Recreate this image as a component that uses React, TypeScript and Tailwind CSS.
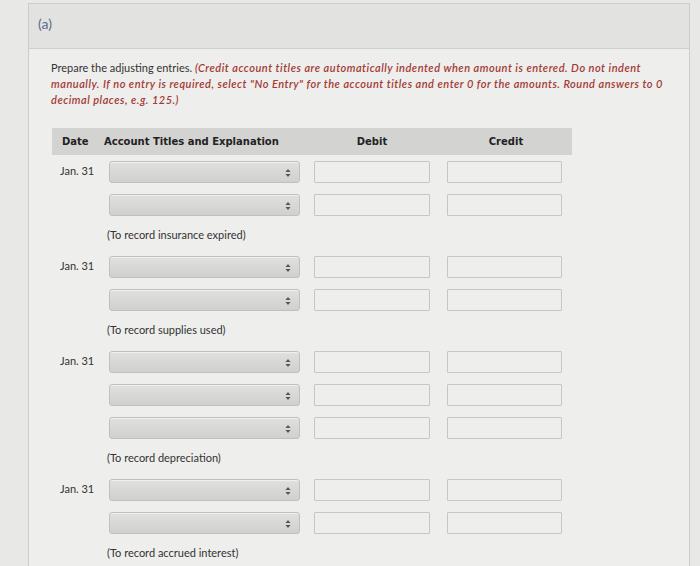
import React from "react";

function Select() {
  return (
    <div className="relative w-[191px] h-[22px] rounded-[3px] border border-[#c0c0be] bg-gradient-to-b from-[#e0e0de] to-[#d0d0ce] shadow-[inset_0_1px_0_rgba(255,255,255,0.5)]">
      <svg className="absolute right-[8px] top-[6px]" width="6" height="10" viewBox="0 0 6 10">
        <path d="M3 1 L5.5 4 L0.5 4 Z" fill="#555" />
        <path d="M3 9 L5.5 6 L0.5 6 Z" fill="#555" />
      </svg>
    </div>
  );
}

function Input({ w }: { w: string }) {
  return <div className={`${w} h-[22px] border border-[#c6c6c4] bg-[#eeeeec] rounded-[1px]`} />;
}

function Row({ date }: { date?: string }) {
  return (
    <div className="flex items-center h-[33px]">
      <div className="w-[57px] pl-[8px] text-[11px] text-[#333]">{date ?? ""}</div>
      <Select />
      <div className="w-[14px]" />
      <Input w="w-[116px]" />
      <div className="w-[17px]" />
      <Input w="w-[115px]" />
    </div>
  );
}

function Expl({ text }: { text: string }) {
  return (
    <div className="flex items-center h-[29px]">
      <div className="w-[55px]" />
      <div className="text-[11px] text-[#333]">{text}</div>
    </div>
  );
}

export default function App() {
  return (
    <div className="w-[700px] h-[566px] bg-[#e8e8e6] overflow-hidden font-['Lato',sans-serif]">
      <div className="ml-[28px] mr-[10px] mt-[3px] h-[580px] border-l border-t border-r border-[#cdcdcb] flex flex-col">
        <div className="h-[45px] bg-[#e2e2e0] border-b border-[#cfcfcd] pl-[9px] pb-[6px] flex items-center text-[14px] text-[#5a6b8f]">
          (a)
        </div>
        <div className="flex-1 bg-[#eeeeec] pl-[22px] pt-[11px]">
          <p className="text-[11px] leading-[16px] text-[#333]">
            Prepare the adjusting entries.{" "}
            <span className="italic font-semibold text-[#a33a36] tracking-[0.5px]">
              (Credit account titles are automatically indented when amount is entered. Do not indent
              <br />
              manually. If no entry is required, select "No Entry" for the account titles and enter 0 for the amounts. Round answers to 0
              <br />
              decimal places, e.g. 125.)
            </span>
          </p>
          <div className="mt-[20px] ml-[1px] w-[520px]">
            <div className="flex items-center h-[27px] bg-[#d3d3d1] text-[10px] font-bold text-[#222] font-['DejaVu_Sans',sans-serif]">
              <div className="w-[52px] pl-[10px]">Date</div>
              <div className="w-[200px]">Account Titles and Explanation</div>
              <div className="w-[136px] text-center">Debit</div>
              <div className="w-[132px] text-center">Credit</div>
            </div>
            <Row date="Jan. 31" />
            <Row />
            <Expl text="(To record insurance expired)" />
            <Row date="Jan. 31" />
            <Row />
            <Expl text="(To record supplies used)" />
            <Row date="Jan. 31" />
            <Row />
            <Row />
            <Expl text="(To record depreciation)" />
            <Row date="Jan. 31" />
            <Row />
            <Expl text="(To record accrued interest)" />
          </div>
        </div>
      </div>
    </div>
  );
}
